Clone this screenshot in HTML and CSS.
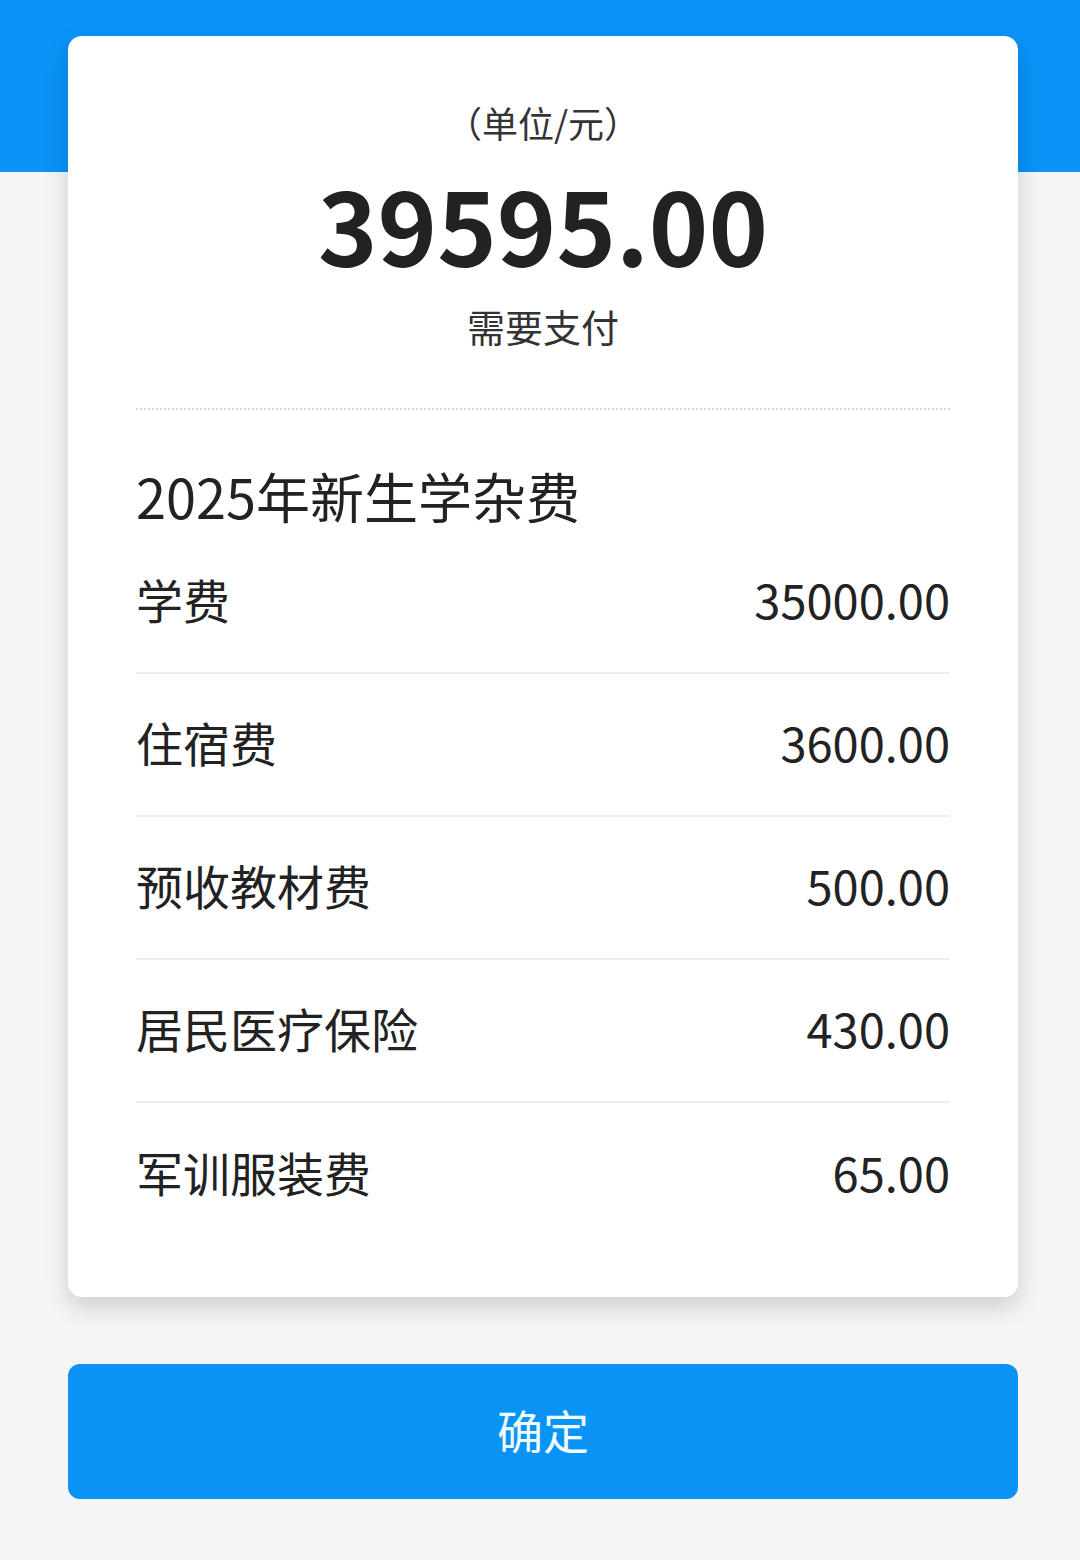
FILE: index.html
```html
<!DOCTYPE html>
<html lang="zh-CN">
<head>
  <meta charset="UTF-8">
  <title>缴费确认</title>
  <meta name="viewport" content="width=device-width, initial-scale=1.0">
  <link rel="stylesheet" href="styles.css">
</head>
<body>

<div class="page">
  <!-- Amount card -->
  <div class="card">
    <div class="summary">
      <div class="unit">（单位/元）</div>
      <div class="total">39595.00</div>
      <div class="total-label">需要支付</div>
    </div>

    <div class="detail">
      <h2 class="detail-title">2025年新生学杂费</h2>
      <div class="row"><span>学费</span><span>35000.00</span></div>
      <div class="row"><span>住宿费</span><span>3600.00</span></div>
      <div class="row"><span>预收教材费</span><span>500.00</span></div>
      <div class="row"><span>居民医疗保险</span><span>430.00</span></div>
      <div class="row"><span>军训服装费</span><span>65.00</span></div>
    </div>
  </div>

  <button class="confirm">确定</button>
</div>

</body>
</html>
```

FILE: styles.css
```css
* { margin: 0; padding: 0; box-sizing: border-box; }
html, body {
  width: 100%;
  height: 100%;
  font-family: "Noto Sans CJK SC", "Noto Sans", sans-serif;
  background: #f5f5f5;
  color: #222;
}
.page {
  min-height: 100%;
  padding: 36px 62px 0 68px;
  background: linear-gradient(#0a93f7 0, #0a93f7 172px, #f5f5f5 172px);
}
.card {
  background: #fff;
  border-radius: 14px;
  box-shadow: 0 10px 24px rgba(0, 0, 0, 0.16);
  padding: 0 68px 52px;
}
.summary {
  text-align: center;
  padding-top: 62px;
  padding-bottom: 56px;
  border-bottom: 2px dotted #d8d8d8;
}
.unit {
  font-size: 36px;
  line-height: 48px;
  color: #333;
}
.total {
  margin-top: 17px;
  font-size: 101px;
  line-height: 120px;
  font-weight: bold;
  color: #222;
}
.total-label {
  margin-top: 17px;
  font-size: 38px;
  line-height: 52px;
  color: #333;
}
.detail {
  padding-top: 54px;
}
.detail-title {
  margin-bottom: 3px;
  font-size: 54px;
  line-height: 64px;
  font-weight: normal;
  color: #222;
}
.row {
  display: flex;
  justify-content: space-between;
  align-items: center;
  height: 143px;
  padding-bottom: 6px;
  font-size: 47px;
  color: #222;
  border-bottom: 2px solid #eee;
}
.row:last-child {
  border-bottom: none;
  height: 142px;
}
.confirm {
  display: block;
  width: 100%;
  height: 135px;
  margin-top: 67px;
  padding-bottom: 6px;
  border: none;
  border-radius: 12px;
  background: #0893f5;
  color: #eefcff;
  font-family: inherit;
  font-size: 46px;
}
```
